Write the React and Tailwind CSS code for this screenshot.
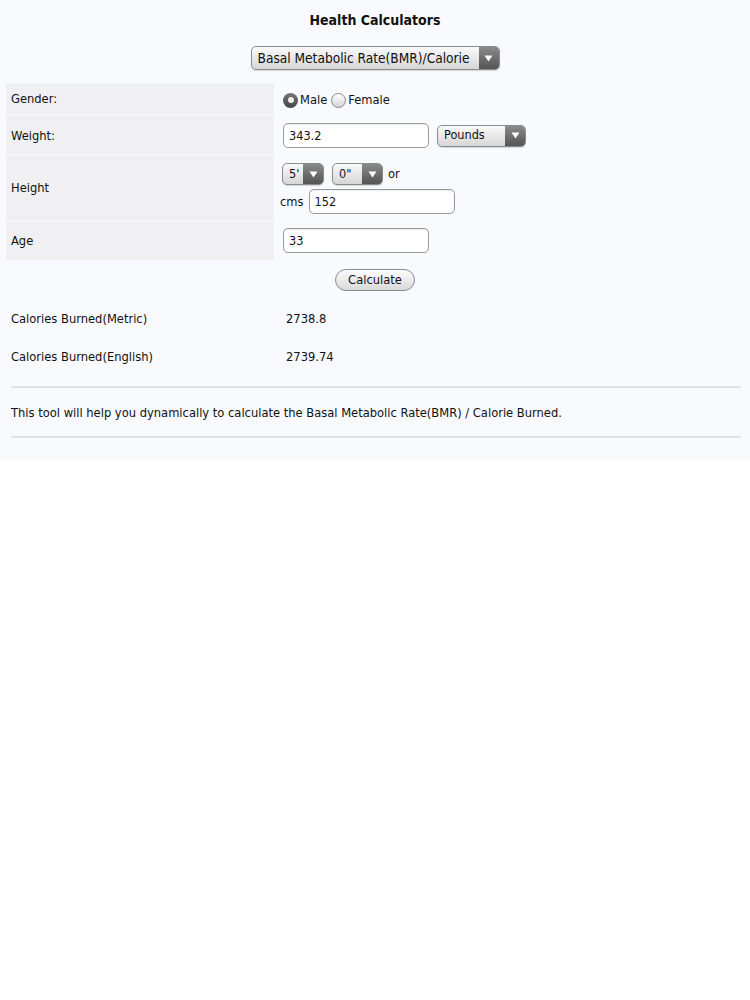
import React, { useState } from "react";

const font = { fontFamily: '"DejaVu Sans Condensed", "DejaVu Sans", Verdana, sans-serif' };

function Arrow() {
  return (
    <span className="flex w-[20px] self-stretch items-center justify-center rounded-r-[4px] bg-gradient-to-b from-[#8a8a8a] to-[#555]">
      <svg width="9" height="7" viewBox="0 0 9 7"><path d="M0.5 0.5h8L4.5 6.5z" fill="#fff" /></svg>
    </span>
  );
}

function FakeSelect({ value, className, textClass = "text-[12.6px]" }) {
  return (
    <div className={"flex items-stretch rounded-[5px] border border-[#8c8c8c] bg-gradient-to-b from-[#fafafa] to-[#d6d6d6] shadow-[0_1px_1px_rgba(0,0,0,0.15)] " + className}>
      <span className={"flex-1 pl-[6px] pr-1 flex items-center text-[#111] whitespace-nowrap " + textClass}>{value}</span>
      <Arrow />
    </div>
  );
}

function TextBox({ value, className }) {
  return (
    <input
      defaultValue={value}
      className={"h-[25px] rounded-[5px] border border-[#9a9a9a] bg-white px-[5px] text-[12.6px] text-[#111] outline-none shadow-[inset_0_1px_1px_rgba(0,0,0,0.08)] " + className}
      style={font}
    />
  );
}

function Radio({ checked, label }) {
  return (
    <label className="flex items-center gap-[2px]">
      {checked ? (
        <span className="w-[15px] h-[15px] rounded-full bg-gradient-to-b from-[#777] to-[#444] flex items-center justify-center">
          <span className="w-[6px] h-[6px] rounded-full bg-[#eee]" />
        </span>
      ) : (
        <span className="w-[15px] h-[15px] rounded-full border border-[#888] bg-gradient-to-b from-[#fff] to-[#d4d4d4]" />
      )}
      <span>{label}</span>
    </label>
  );
}

export default function App() {
  const [gender] = useState("male");

  return (
    <div className="min-h-[1000px] bg-white text-[12.8px] text-[#111]" style={font}>
      <div className="bg-[#f9fafd] pb-[22px]">
        <h1 className="pt-[11px] text-center text-[14px] font-bold leading-[18px]">Health Calculators</h1>
        <div className="flex justify-center mt-[17px]">
          <FakeSelect value="Basal Metabolic Rate(BMR)/Calorie" className="w-[249px] h-[24px]" textClass="text-[13.6px]" />
        </div>

        <div className="mt-[13px] mx-[6px] grid grid-cols-[268px_1fr] gap-y-px">
          <div className="bg-[#f0f0f2] h-[32px] flex items-center pl-[5px]">Gender:</div>
          <div className="flex items-center gap-[4px] pl-[9px] pt-[2px]">
            <Radio checked={gender === "male"} label="Male" />
            <Radio checked={gender === "female"} label="Female" />
          </div>

          <div className="bg-[#f0f0f2] h-[39px] flex items-center pl-[5px]">Weight:</div>
          <div className="flex items-center gap-[8px] pl-[9px]">
            <TextBox value="343.2" className="w-[146px]" />
            <FakeSelect value="Pounds" className="w-[89px] h-[22px]" />
          </div>

          <div className="bg-[#f0f0f2] h-[64px] flex items-center pl-[5px]">Height</div>
          <div className="flex flex-col pl-[6px] pt-[7px]">
            <div className="flex items-center gap-[8px] pl-[2px]">
              <FakeSelect value="5'" className="w-[42px] h-[22px]" />
              <FakeSelect value={'0"'} className="w-[51px] h-[22px]" />
              <span className="-ml-[3px]">or</span>
            </div>
            <div className="flex items-center gap-[5px] mt-[4px]">
              <span>cms</span>
              <TextBox value="152" className="w-[146px]" />
            </div>
          </div>

          <div className="bg-[#f0f0f2] h-[39px] flex items-center pl-[5px]">Age</div>
          <div className="flex items-center pl-[9px]">
            <TextBox value="33" className="w-[146px]" />
          </div>
        </div>

        <div className="flex justify-center mt-[9px]">
          <button className="h-[22px] w-[80px] rounded-full border border-[#8c8c8c] bg-gradient-to-b from-[#fdfdfd] to-[#d9d9d9] text-[12.8px] text-[#111]" style={font}>
            Calculate
          </button>
        </div>

        <div className="ml-[11px] mr-[9px] mt-[9px]">
          <div className="grid grid-cols-[275px_1fr] h-[38px] items-center">
            <span>Calories Burned(Metric)</span>
            <span>2738.8</span>
          </div>
          <div className="grid grid-cols-[275px_1fr] h-[38px] items-center">
            <span>Calories Burned(English)</span>
            <span>2739.74</span>
          </div>
          <div className="mt-[10px] h-[2px] bg-[#e3e3e5]" />
          <p className="pt-[17px] pb-[15px] leading-[16px]">This tool will help you dynamically to calculate the Basal Metabolic Rate(BMR) / Calorie Burned.</p>
          <div className="h-[2px] bg-[#e3e3e5]" />
        </div>
      </div>
    </div>
  );
}
